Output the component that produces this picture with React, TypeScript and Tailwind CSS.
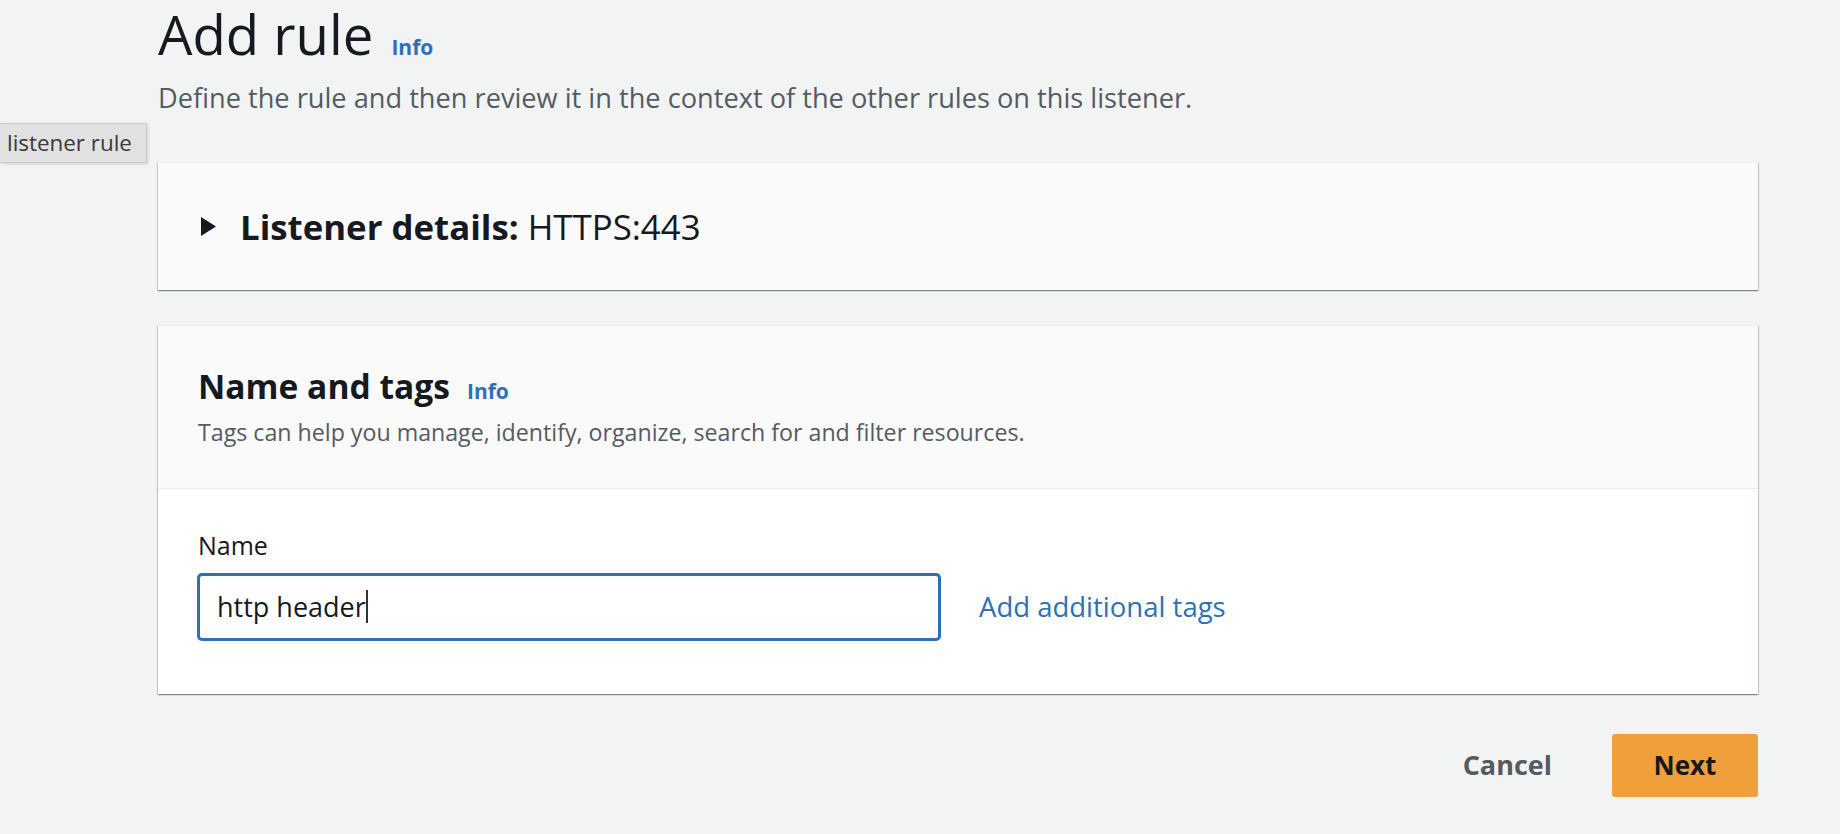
// App.tsx — "Add rule" listener rule form

const cardShadow =
    "shadow-[0_1px_1px_0_rgba(0,28,36,0.3),1px_1px_1px_0_rgba(0,28,36,0.15),-1px_1px_1px_0_rgba(0,28,36,0.15)]";

function InfoLink({ className = "" }: { className?: string }) {
    return (
        <a href="#" className={`font-bold text-[21px] text-[#2f6fb5] ${className}`}>
            Info
        </a>
    );
}

function Caret() {
    return (
        <svg width="15" height="19" viewBox="0 0 15 19" className="shrink-0">
            <polygon points="0,0 15,9.5 0,19" fill="#16191f" />
        </svg>
    );
}

export default function App() {
    return (
        <div className="relative h-[834px] w-full overflow-hidden bg-[#f2f3f3] font-['Open_Sans',sans-serif] text-[#16191f]">
            {/* native browser tooltip hanging over the page */}
            <div className="absolute left-0 top-[123px] flex h-[40px] w-[147px] items-center border border-l-0 border-[#cdcdcd] bg-[#e1e1e1] pl-[7px] text-[22.4px] leading-none text-[#3a3a3a] shadow-[1px_1px_3px_rgba(0,0,0,0.15)]">
                listener rule
            </div>

            <div className="pl-[158px] pr-[82px] pt-px">
                {/* page header */}
                <div className="flex items-baseline">
                    <h1 className="text-[54.5px] font-normal leading-[66px]">Add rule</h1>
                    <InfoLink className="ml-[18px]" />
                </div>
                <p className="mt-[13px] text-[27.2px] leading-[36px] text-[#545b64]">
                    Define the rule and then review it in the context of the other rules on this listener.
                </p>

                {/* listener details (collapsed) */}
                <div className={`mt-[46px] flex h-[128px] items-center border-t border-[#eaeded] bg-[#fafafa] pl-[43px] ${cardShadow}`}>
                    <Caret />
                    <h2 className="ml-[24px] text-[34.8px] leading-[44px]">
                        <span className="font-bold">Listener details:</span> HTTPS:443
                    </h2>
                </div>

                {/* name and tags */}
                <div className={`mt-[35px] border-t border-[#eaeded] bg-white ${cardShadow}`}>
                    <div className="border-b border-[#eaeded] bg-[#fafafa] px-[40px] pb-[41px] pt-[40px]">
                        <div className="flex items-baseline">
                            <h2 className="text-[33.6px] font-bold leading-[40px]">Name and tags</h2>
                            <InfoLink className="ml-[17px]" />
                        </div>
                        <p className="mt-[9px] text-[23.2px] leading-[30px] text-[#545b64]">
                            Tags can help you manage, identify, organize, search for and filter resources.
                        </p>
                    </div>

                    <div className="px-[40px] pb-[54px] pt-[40px]">
                        <label className="block text-[25px] leading-[32px]">Name</label>
                        <div className="mt-[13px] flex items-center">
                            <div className="flex h-[66px] w-[742px] items-center rounded-[4px] border-2 border-[#2f6fb5] bg-white pl-[17px] shadow-[0_0_0_1px_#2f6fb5]">
                                <span className="text-[27px] leading-none">http header</span>
                                <span className="h-[33px] w-[2px] bg-[#333]" />
                            </div>
                            <a href="#" className="ml-[39px] text-[27.5px] text-[#2f6fb5]">
                                Add additional tags
                            </a>
                        </div>
                    </div>
                </div>

                {/* actions */}
                <div className="mt-[40px] flex justify-end gap-[24px]">
                    <button className="h-[63px] px-[36px] text-[27px] font-bold text-[#545b64]">Cancel</button>
                    <button className="h-[63px] w-[146px] rounded-[3px] bg-[#f0a03a] text-[26px] font-bold text-[#16191f]">
                        Next
                    </button>
                </div>
            </div>
        </div>
    );
}
